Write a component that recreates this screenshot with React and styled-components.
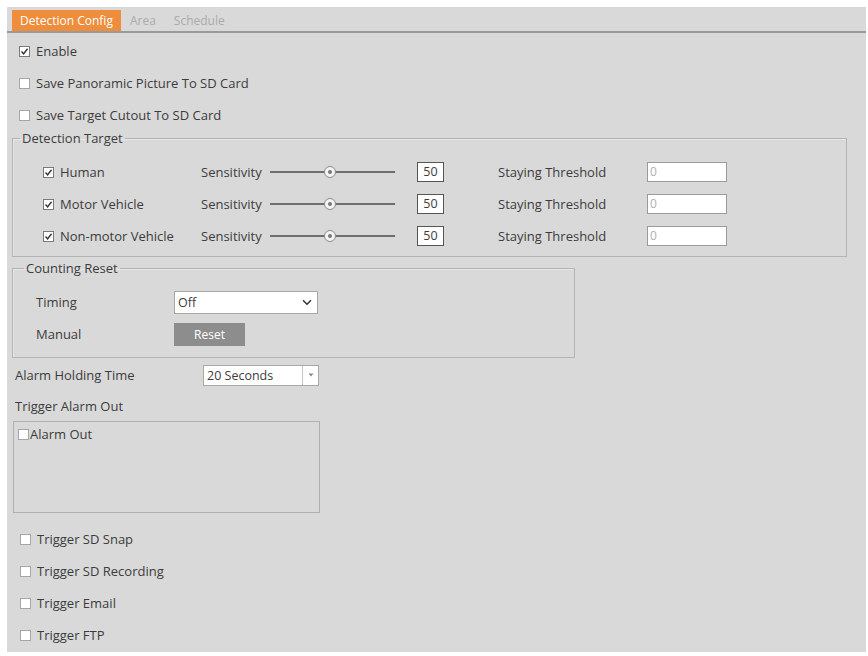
import React from 'react';
import styled, { createGlobalStyle } from 'styled-components';

const GlobalStyle = createGlobalStyle`
  body {
    margin: 0;
    background: #fff;
    font-family: "Open Sans", "Noto Sans", sans-serif;
    color: #3c3c3c;
  }
`;

const Panel = styled.div`
  margin: 7px 2px 0 7px;
  height: 645px;
  background: #d9d9d9;
  font-size: 13px;
`;

const TabBar = styled.div`
  display: flex;
  align-items: flex-end;
  padding: 3px 0 0 5px;
  border-bottom: 2px solid #9a9a9a;
`;

const Tab = styled.div`
  height: 21px;
  line-height: 21px;
  padding: 0 ${(p) => (p.active ? '8px' : '9px')};
  font-size: 12px;
  background: ${(p) => (p.active ? '#ee8d3c' : 'transparent')};
  color: ${(p) => (p.active ? '#fff' : '#ababab')};
`;

const List = styled.div`
  padding-top: 2px;
`;

const CheckRow = styled.label`
  display: flex;
  align-items: center;
  gap: ${(p) => p.gap ?? 6}px;
  height: ${(p) => p.h ?? 32}px;
  padding-left: ${(p) => p.indent ?? 12}px;
`;

const Box = styled.span`
  display: inline-flex;
  align-items: center;
  justify-content: center;
  width: 9px;
  height: 9px;
  border: 1px solid ${(p) => (p.checked ? '#7a7a7a' : '#a6a6a6')};
  background: #fff;
  flex: none;
`;

const Check = ({ checked }) => (
  <Box checked={checked}>
    {checked && (
      <svg width="9" height="9" viewBox="0 0 9 9">
        <path d="M1.5 4.5 L3.6 6.8 L7.6 1.8" fill="none" stroke="#3a3a3a" strokeWidth="1.4" />
      </svg>
    )}
  </Box>
);

const Group = styled.fieldset`
  margin: ${(p) => p.mt ?? 0}px 0 0 5px;
  width: ${(p) => p.w}px;
  box-sizing: border-box;
  padding: ${(p) => p.pad};
  border: 1px solid #b4b4b4;
  box-shadow: inset 1px 1px 0 #e6e6e6;
  min-width: 0;
`;

const Legend = styled.legend`
  margin-left: ${(p) => p.shift}px;
  padding: 0 2px;
  line-height: 14px;
  font-size: 13px;
`;

const TargetRow = styled.div`
  display: flex;
  align-items: center;
  height: 32px;
`;

const Cell = styled.div`
  display: flex;
  align-items: center;
  gap: 6px;
  width: ${(p) => p.w}px;
  flex: none;
`;

const Track = styled.div`
  position: relative;
  width: 125px;
  height: 2px;
  background: #6f6f6f;
  flex: none;
`;

const Thumb = styled.span`
  position: absolute;
  top: -5px;
  left: 54px;
  width: 10px;
  height: 10px;
  border-radius: 50%;
  border: 1px solid #8a8a8a;
  background: #f4f4f4;
  display: flex;
  align-items: center;
  justify-content: center;
  &::after {
    content: '';
    width: 4px;
    height: 4px;
    border-radius: 50%;
    background: #777;
  }
`;

const NumBox = styled.div`
  width: 25px;
  height: 18px;
  border: 1px solid #555;
  background: #fff;
  line-height: 18px;
  text-align: center;
  font-size: 12.5px;
  flex: none;
`;

const TextBox = styled.div`
  width: 76px;
  height: 18px;
  border: 1px solid #9a9a9a;
  background: #fff;
  line-height: 18px;
  padding-left: 2px;
  font-size: 12px;
  color: #b0b0b0;
`;

const FormRow = styled.div`
  display: flex;
  align-items: center;
  height: ${(p) => p.h ?? 32}px;
  margin-top: ${(p) => p.mt ?? 0}px;
  padding-left: ${(p) => p.indent ?? 0}px;
`;

const Label = styled.div`
  width: ${(p) => p.w}px;
  flex: none;
`;

const Select = styled.div`
  display: flex;
  align-items: center;
  justify-content: space-between;
  box-sizing: border-box;
  width: ${(p) => p.w}px;
  height: ${(p) => p.h}px;
  border: 1px solid #a8a8a8;
  background: #fff;
  padding-left: 3px;
  font-size: 12.5px;
`;

const Arrow = styled.span`
  display: flex;
  align-items: center;
  justify-content: center;
  align-self: stretch;
  width: ${(p) => p.w}px;
  border-left: ${(p) => (p.split ? '1px solid #c4c4c4' : 'none')};
`;

const ResetButton = styled.div`
  width: 71px;
  height: 23px;
  line-height: 23px;
  text-align: center;
  background: #8d8d8d;
  color: #fff;
  font-size: 12px;
`;

const AlarmBox = styled.div`
  margin-left: 6px;
  width: 307px;
  height: 92px;
  box-sizing: border-box;
  border: 1px solid #b0b0b0;
  padding: 3px 0 0 4px;
`;

const Triggers = styled.div`
  margin-top: 10px;
`;

const targets = ['Human', 'Motor Vehicle', 'Non-motor Vehicle'];
const triggers = ['Trigger SD Snap', 'Trigger SD Recording', 'Trigger Email', 'Trigger FTP'];

export default function App() {
  return (
    <>
      <GlobalStyle />
      <Panel>
        <TabBar>
          <Tab active>Detection Config</Tab>
          <Tab>Area</Tab>
          <Tab>Schedule</Tab>
        </TabBar>
        <List>
          <CheckRow>
            <Check checked />
            Enable
          </CheckRow>
          <CheckRow>
            <Check />
            Save Panoramic Picture To SD Card
          </CheckRow>
          <CheckRow>
            <Check />
            Save Target Cutout To SD Card
          </CheckRow>
        </List>

        <Group w={835} pad="11px 0 4px 30px">
          <Legend shift={-23}>Detection Target</Legend>
          {targets.map((t) => (
            <TargetRow key={t}>
              <Cell w={158}>
                <Check checked />
                {t}
              </Cell>
              <Cell w={69}>Sensitivity</Cell>
              <Cell w={147}>
                <Track>
                  <Thumb />
                </Track>
              </Cell>
              <Cell w={81}>
                <NumBox>50</NumBox>
              </Cell>
              <Cell w={149}>Staying Threshold</Cell>
              <TextBox>0</TextBox>
            </TargetRow>
          ))}
        </Group>

        <Group w={563} mt={4} pad="11px 0 7px 23px">
          <Legend shift={-12}>Counting Reset</Legend>
          <FormRow>
            <Label w={138}>Timing</Label>
            <Select w={144} h={23}>
              Off
              <Arrow w={20}>
                <svg width="10" height="7" viewBox="0 0 10 7">
                  <path d="M1 1.2 L5 5.2 L9 1.2" fill="none" stroke="#333" strokeWidth="1.5" />
                </svg>
              </Arrow>
            </Select>
          </FormRow>
          <FormRow>
            <Label w={138}>Manual</Label>
            <ResetButton>Reset</ResetButton>
          </FormRow>
        </Group>

        <FormRow indent={8} mt={1}>
          <Label w={188}>Alarm Holding Time</Label>
          <Select w={116} h={21}>
            20 Seconds
            <Arrow w={15} split>
              <svg width="6" height="4" viewBox="0 0 6 4">
                <path d="M0.5 0.5 L3 3.5 L5.5 0.5 Z" fill="#888" />
              </svg>
            </Arrow>
          </Select>
        </FormRow>
        <FormRow indent={8} h={30}>
          Trigger Alarm Out
        </FormRow>
        <AlarmBox>
          <CheckRow indent={0} gap={1} h={18}>
            <Check />
            Alarm Out
          </CheckRow>
        </AlarmBox>

        <Triggers>
          {triggers.map((t) => (
            <CheckRow key={t} indent={13}>
              <Check />
              {t}
            </CheckRow>
          ))}
        </Triggers>
      </Panel>
    </>
  );
}
